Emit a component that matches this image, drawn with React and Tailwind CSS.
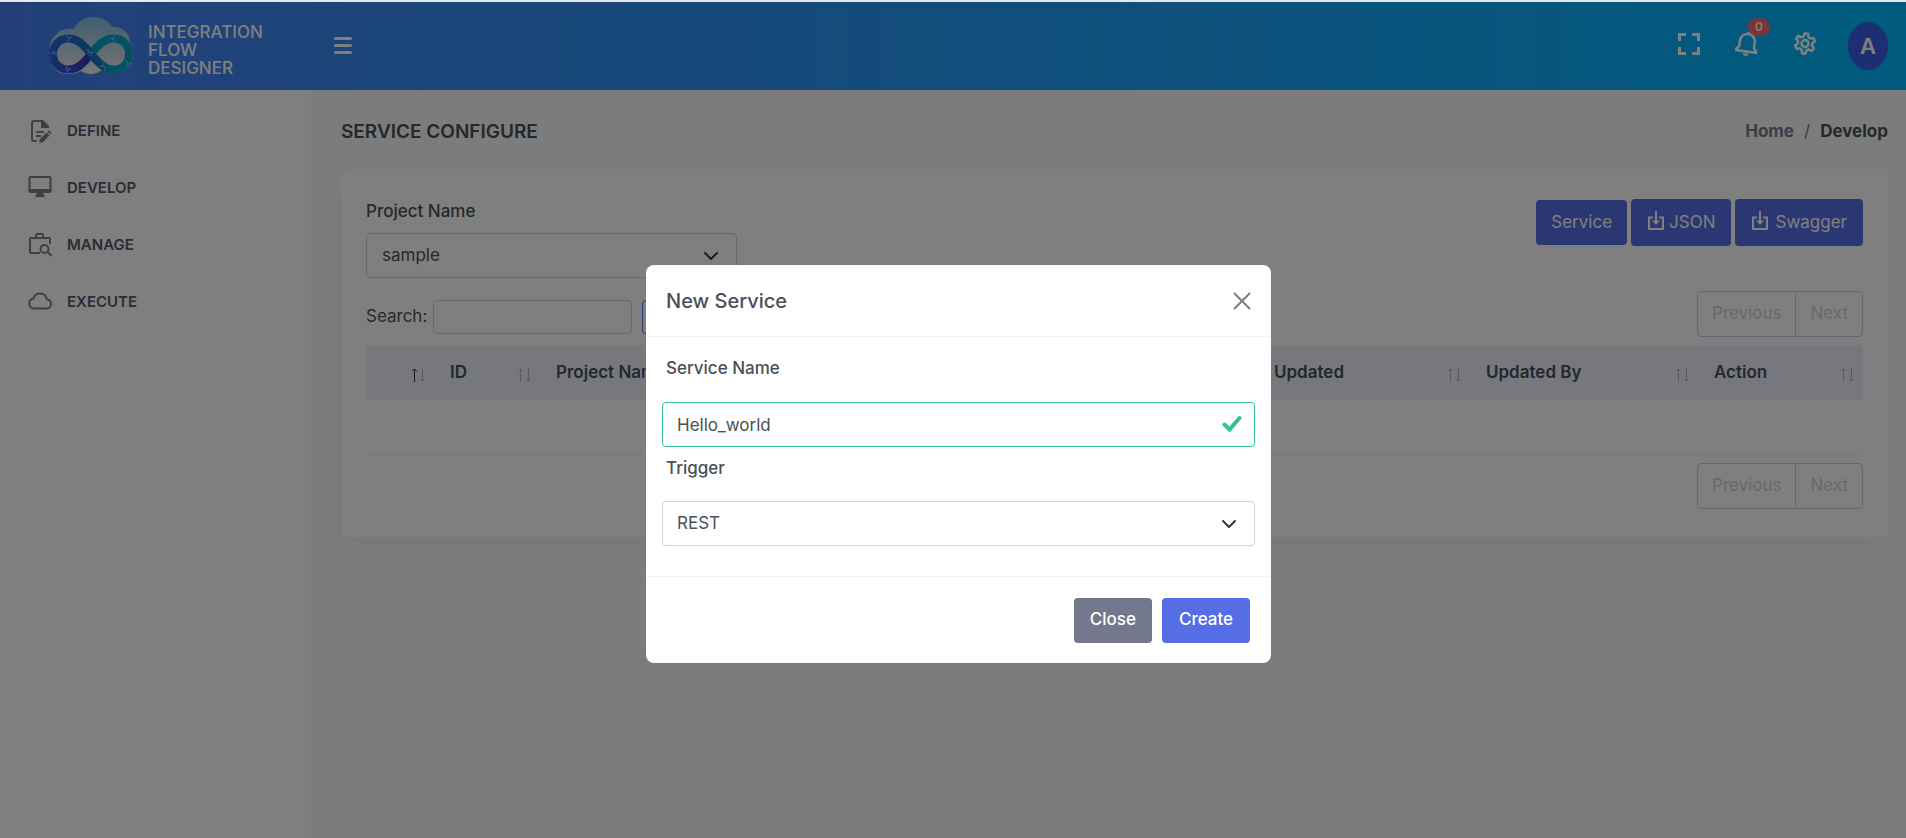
import { useState } from 'react';

const MENU = [
  { label: 'DEFINE', icon: DefineIcon },
  { label: 'DEVELOP', icon: DevelopIcon },
  { label: 'MANAGE', icon: ManageIcon },
  { label: 'EXECUTE', icon: ExecuteIcon },
];

const COLUMNS = [
  { label: '', width: 'w-[68px]', sorted: true },
  { label: 'ID', width: 'w-[106px]' },
  { label: 'Project Name' },
  { label: 'Service Name' },
  { label: 'Created' },
  { label: 'Created By' },
  { label: 'Updated', width: 'w-[212px]' },
  { label: 'Updated By', width: 'w-[228px]' },
  { label: 'Action', width: 'w-[165px]' },
];

function DefineIcon(props) {
  return (
    <svg viewBox="0 0 24 24" fill="none" stroke="currentColor" strokeWidth="2" {...props}>
      <path d="M9 22H6a2 2 0 0 1-2-2V4a2 2 0 0 1 2-2h8" />
      <path d="M13 1h2l6 6v2h-8z" fill="currentColor" stroke="none" />
      <path d="M8 13h8M8 17h5" />
      <path d="M11.500 23.500v-3l7-7 3 3-7 7zM19.500 12.500l1.200-1.200 3 3-1.200 1.200z" fill="currentColor" stroke="none" />
    </svg>
  );
}

function DevelopIcon(props) {
  return (
    <svg viewBox="0 0 24 24" fill="currentColor" {...props}>
      <path fillRule="evenodd" d="M2.500 0h19A2 2 0 0 1 23.500 2v13a2 2 0 0 1-2 2H15l2 4H7l2-4H2.500a2 2 0 0 1-2-2V2a2 2 0 0 1 2-2zm0 2v11h19V2z" />
    </svg>
  );
}

function ManageIcon(props) {
  return (
    <svg viewBox="0 0 24 24" fill="none" stroke="currentColor" strokeWidth="2" {...props}>
      <path d="M12 20H3a1 1 0 0 1-1-1V6a1 1 0 0 1 1-1h18a1 1 0 0 1 1 1v5M8 5V2a1 1 0 0 1 1-1h5a1 1 0 0 1 1 1v3" />
      <circle cx="16.500" cy="16" r="4" />
      <path d="M19.500 19l4 4" />
    </svg>
  );
}

function ExecuteIcon(props) {
  return (
    <svg viewBox="0 0 24 24" fill="none" stroke="currentColor" strokeWidth="2" {...props}>
      <path d="M6 18.500a5 5 0 0 1-.6-9.900C6.300 5.500 8.900 3.500 12 3.500c3.600 0 6.300 2.500 6.900 5.900 2.400.2 4.100 2 4.100 4.500 0 2.600-2 4.600-4.500 4.600z" />
    </svg>
  );
}

function Logo() {
  return (
    <svg viewBox="0 0 84 58" width="84" height="58" fill="none" aria-hidden="true">
      <defs>
        <linearGradient id="cloud" x1="0" y1="0" x2="0" y2="1">
          <stop offset="0" stopColor="#7cc0dc" />
          <stop offset="0.75" stopColor="#d5dcea" />
          <stop offset="1" stopColor="#eef0f5" />
        </linearGradient>
        <linearGradient id="loop" gradientUnits="userSpaceOnUse" x1="4" y1="0" x2="80" y2="0">
          <stop offset="0" stopColor="#2b62d6" />
          <stop offset="0.5" stopColor="#1173c4" />
          <stop offset="1" stopColor="#08a2c8" />
        </linearGradient>
        <linearGradient id="tail" gradientUnits="userSpaceOnUse" x1="4" y1="0" x2="40" y2="0">
          <stop offset="0" stopColor="#2b62d6" />
          <stop offset="0.5" stopColor="#3a46d4" />
          <stop offset="1" stopColor="#3638b8" />
        </linearGradient>
      </defs>
      <path d="M19 57C7 57 0 48 0 36c0-8 2-13 6-17 4-6 11-8 19-7C28 5 35 0 44 0s16 4 19 10c10-1 17 5 18 15 2 4 3 8 3 12 0 12-8 19-19 19-6 0-9-2-12-3-6 5-15 5-21 1-4 2-8 3-13 3z" fill="url(#cloud)" />
      <path d="M42 37C51 26 56 21.500 65 21.500c9 0 15 7 15 15.500s-6 15.500-15 15.500c-9 0-14-4.500-23-15.500" stroke="#08a2c8" strokeWidth="8" />
      <path d="M4 39c1 8 7 13.500 15 13.500 9 0 14-4.500 23-15.500" stroke="url(#tail)" strokeWidth="8" />
      <path d="M4 39C3 29 10 21.500 19 21.500c9 0 14 4.500 23 15.500 6 7 10 11 14 13" stroke="url(#loop)" strokeWidth="8" />
      <path d="M0 36l4 1 1-3 1 3 3-1M17 18l2 3 4-1-4 2 1 4M19 49l-3 3 6 0-4 2 1 3M36 33l4 0-1 3 5-1-3 4M66 18l-2 4-4-1 5 2 0 3M76 43l3 2-1 4 3-3 3 1M54 45l1 4-4 0 5 1 0 4" stroke="#7fb4e8" strokeWidth="1" />
    </svg>
  );
}

function SortArrows({ sorted }) {
  return (
    <svg viewBox="0 0 14 14" width="14" height="14" fill="none" stroke="#32394e" strokeWidth="1" className="mt-1 shrink-0" aria-hidden="true">
      <path d="M2.500 14V1M0 3.500L2.500 1l2.500 2.500" opacity={sorted ? 1 : 0.3} />
      <path d="M10.500 0v13M8 10.500l2.500 2.500 2.500-2.500" opacity="0.3" />
    </svg>
  );
}

function Chevron() {
  return (
    <svg viewBox="0 0 16 16" width="16" height="16" fill="none" stroke="#343a40" strokeWidth="2" strokeLinecap="round" strokeLinejoin="round" className="pointer-events-none absolute top-1/2 right-[18px] -translate-y-1/2" aria-hidden="true">
      <path d="M2 5l6 6 6-6" />
    </svg>
  );
}

function DownloadIcon() {
  return (
    <svg viewBox="0 0 18 20" width="18" height="20" fill="none" stroke="currentColor" strokeWidth="2" className="mb-1" aria-hidden="true">
      <path d="M6 6.500H2V18h14V6.500h-4" />
      <path d="M9 0v10" />
      <path d="M5 9.500h8L9 14z" fill="currentColor" stroke="none" />
    </svg>
  );
}

function Pager() {
  return (
    <div className="flex h-[46px] rounded border border-[#ced4da] text-[#ced4da]">
      <button type="button" disabled className="border-r border-[#ced4da] px-[14px]">Previous</button>
      <button type="button" disabled className="px-[14px]">Next</button>
    </div>
  );
}

function Header() {
  return (
    <header className="relative z-10 flex h-[88px] shrink-0 items-center bg-linear-to-r/srgb from-[#477ff0] to-[#00b8fc] pr-[18px]">
      <a href="#home" className="flex w-[311px] shrink-0 items-center gap-[15px] pl-[49px] text-[17px] leading-[18px] font-medium text-white">
        <Logo />
        <span className="pt-2">INTEGRATION<br />FLOW<br />DESIGNER</span>
      </a>
      <button type="button" aria-label="Toggle menu" className="mb-[2px] ml-[23px] flex w-[18px] flex-col gap-1">
        <span className="h-[3px] rounded-xs bg-white" />
        <span className="h-[3px] rounded-xs bg-white" />
        <span className="h-[3px] rounded-xs bg-white" />
      </button>
      <div className="ml-auto flex items-center text-white">
        <div className="mr-[31px] flex items-center gap-[34px] pb-[5px]">
          <button type="button" aria-label="Full screen">
            <svg viewBox="0 0 24 24" width="24" height="24" fill="none" stroke="currentColor" strokeWidth="3">
              <path d="M2.500 9V2.500H9M15 2.500h6.500V9M21.500 15v6.500H15M9 21.500H2.500V15" />
            </svg>
          </button>
          <button type="button" aria-label="Notifications" className="relative">
            <svg viewBox="0 0 24 24" width="24" height="24" fill="none" stroke="currentColor" strokeWidth="2.500">
              <g transform="rotate(8 12 12)">
                <path d="M2 19.500v-1.500l2.500-2.500V9.500a7.500 7.500 0 0 1 15 0v6l2.500 2.500v1.500z" />
                <path d="M9 21.500h6a3 2.500 0 0 1-6 0z" fill="currentColor" stroke="none" />
                <path d="M12 2V0" />
              </g>
            </svg>
            <span className="absolute -top-[14px] left-[13px] rounded-full bg-[#f46a6a] px-[7px] text-[12px] leading-[18px] font-semibold">0</span>
          </button>
          <button type="button" aria-label="Settings">
            <svg viewBox="0 0 24 24" width="24" height="24" fill="none" stroke="currentColor" strokeWidth="2.500" strokeLinejoin="round">
              <g transform="rotate(8 12 12)">
                <path d="M10.300 1.500h3.400l.7 3.100 2.300 1.300 3-1 1.800 3-2.300 2.200v2.600l2.300 2.200-1.800 3-3-1-2.300 1.300-.7 3.300h-3.400l-.7-3.300-2.300-1.300-3 1-1.800-3 2.300-2.200v-2.600L2.500 7.900l1.800-3 3 1 2.300-1.300z" />
                <circle cx="12" cy="11.500" r="3.500" />
              </g>
            </svg>
          </button>
        </div>
        <button type="button" className="h-12 w-10 rounded-[50%] bg-[#3b5de7] text-[22px] font-semibold">A</button>
      </div>
    </header>
  );
}

function Sidebar() {
  return (
    <nav className="w-[311px] shrink-0 bg-white pt-3">
      <ul>
        {MENU.map(({ label, icon: Icon }) => (
          <li key={label}>
            <a href={`#${label.toLowerCase()}`} className="flex h-[57px] items-center gap-[15px] pl-7 text-[15px] font-semibold text-[#545a6d]">
              <Icon className="size-6 shrink-0 text-[#7f7f7f]" />
              <span className="pt-[2px]">{label}</span>
            </a>
          </li>
        ))}
      </ul>
    </nav>
  );
}

function ServicePanel() {
  return (
    <section className="rounded bg-white px-[25px] pt-[25px] pb-7 shadow-[0_12px_24px_rgba(18,38,63,0.03)]">
      <div className="flex items-start justify-between">
        <div className="w-[371px]">
          <label htmlFor="project" className="mb-[10px] block leading-6 font-medium text-[#495057]">Project Name</label>
          <div className="relative">
            <select id="project" className="h-[45px] w-full appearance-none rounded border border-[#ced4da] px-[15px] text-[#495057]">
              <option>sample</option>
            </select>
            <Chevron />
          </div>
        </div>
        <div className="flex items-center gap-1 text-white">
          <button type="button" className="h-[45px] rounded bg-[#556ee6] px-[15px]">Service</button>
          <button type="button" className="flex h-[47px] items-center gap-1 rounded bg-[#556ee6] px-4"><DownloadIcon />JSON</button>
          <button type="button" className="flex h-[47px] items-center gap-[6px] rounded bg-[#556ee6] px-4"><DownloadIcon />Swagger</button>
        </div>
      </div>

      <div className="mt-[13px] flex items-center justify-between">
        <div className="flex items-center pt-[6px]">
          <label htmlFor="search" className="w-[67px] text-[#495057]">Search:</label>
          <input id="search" type="text" className="h-[34px] w-[199px] rounded border border-[#ced4da] px-2" />
          <button type="button" aria-label="Clear search" className="ml-[10px] h-[34px] w-16 rounded border border-[#556ee6]" />
        </div>
        <Pager />
      </div>

      <table className="mt-2 w-full table-fixed">
        <thead>
          <tr className="h-[55px] bg-[#edf0fa]">
            {COLUMNS.map((c, i) => (
              <th key={i} className={`${c.width ?? ''} pr-2 pl-4 text-left font-semibold text-[#495057]`}>
                <div className="flex items-center justify-between">
                  <span className="whitespace-nowrap">{c.label}</span>
                  <SortArrows sorted={c.sorted} />
                </div>
              </th>
            ))}
          </tr>
        </thead>
        <tbody>
          <tr className="h-[55px] border-b border-[#eff2f7]">
            <td colSpan={9} />
          </tr>
        </tbody>
      </table>

      <div className="mt-[7px] flex justify-end"><Pager /></div>
    </section>
  );
}

function ServiceModal() {
  const [name, setName] = useState('Hello_world');
  return (
    <div role="dialog" aria-modal="true" aria-labelledby="modal-title" className="w-[625px] rounded-lg bg-white text-[#495057]">
      <div className="flex h-[72px] items-center justify-between border-b border-[#eff2f7] px-5">
        <h2 id="modal-title" className="text-[20px] font-medium">New Service</h2>
        <button type="button" aria-label="Close dialog" className="text-[#7f7f7f]">
          <svg viewBox="0 0 18 18" width="18" height="18" fill="none" stroke="currentColor" strokeWidth="2" strokeLinecap="round">
            <path d="M1.500 1.500l15 15M16.500 1.500l-15 15" />
          </svg>
        </button>
      </div>
      <div className="px-4 pt-[19px] pb-[30px]">
        <label htmlFor="service-name" className="block px-1 leading-6 font-medium">Service Name</label>
        <div className="relative mt-[22px]">
          <input id="service-name" value={name} onChange={e => setName(e.target.value)} className="h-[45px] w-full rounded border border-[#34c38f] px-[14px]" />
          <svg viewBox="0 0 20 18" width="20" height="18" fill="none" stroke="#34c38f" strokeWidth="4" strokeLinecap="round" className="absolute top-[13px] right-[13px]" aria-hidden="true">
            <path d="M2.500 9.500L7.500 14.500L17.500 3" />
          </svg>
        </div>
        <label htmlFor="trigger" className="mt-[9px] block px-1 leading-6 font-medium">Trigger</label>
        <div className="relative mt-[21px]">
          <select id="trigger" className="h-[45px] w-full appearance-none rounded border border-[#ced4da] px-[14px]">
            <option>REST</option>
          </select>
          <Chevron />
        </div>
      </div>
      <div className="flex h-[87px] items-center justify-end gap-[10px] border-t border-[#eff2f7] pr-[21px] font-medium text-white">
        <button type="button" className="h-[45px] rounded bg-[#74788d] px-4">Close</button>
        <button type="button" className="h-[45px] min-w-[88px] rounded bg-[#556ee6] px-4">Create</button>
      </div>
    </div>
  );
}

export default function App() {
  return (
    <div className="flex min-h-screen flex-col border-t-2 border-[#e4eaea] bg-[#f8f8fb] font-['Inter',sans-serif] text-[17px]">
      <Header />
      <div className="flex flex-1">
        <Sidebar />
        <main className="min-w-0 flex-1 pr-[18px] pl-[30px]">
          <div className="flex h-[84px] items-center justify-between">
            <h1 className="text-[19px] font-semibold text-[#495057]">SERVICE CONFIGURE</h1>
            <nav aria-label="Breadcrumb" className="flex gap-[10px] font-bold">
              <a href="#home" className="text-[#74788d]">Home</a>
              <span className="font-normal text-[#74788d]">/</span>
              <span className="text-[#495057]">Develop</span>
            </nav>
          </div>
          <ServicePanel />
        </main>
      </div>

      <div className="fixed inset-x-0 top-[2px] bottom-0 z-20 flex items-start justify-center bg-black/50 pt-[263px] pl-[11px]">
        <ServiceModal />
      </div>
    </div>
  );
}
